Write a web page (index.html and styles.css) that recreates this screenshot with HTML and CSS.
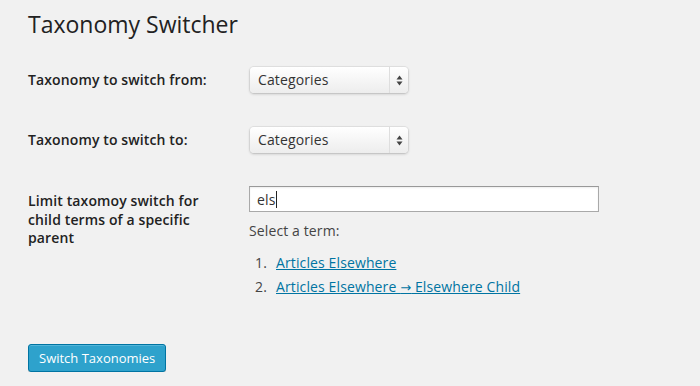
FILE: index.html
```html
<!DOCTYPE html>
<html>
<head>
<meta charset="utf-8">
<link rel="stylesheet" href="styles.css">
</head>
<body>
<div class="wrap">
  <h1 class="title">Taxonomy Switcher</h1>
  <div class="form">
    <div class="row">
      <div class="label">Taxonomy to switch from:</div>
      <div class="field">
        <div class="select">
          <span class="select-text">Categories</span>
          <span class="select-arrow">
            <svg width="7" height="11" viewBox="0 0 7 11"><path d="M3.5 0.5 L6.5 4.5 L0.5 4.5 Z M3.5 10.5 L6.5 6.5 L0.5 6.5 Z" fill="#444"/></svg>
          </span>
        </div>
      </div>
    </div>
    <div class="row">
      <div class="label">Taxonomy to switch to:</div>
      <div class="field">
        <div class="select">
          <span class="select-text">Categories</span>
          <span class="select-arrow">
            <svg width="7" height="11" viewBox="0 0 7 11"><path d="M3.5 0.5 L6.5 4.5 L0.5 4.5 Z M3.5 10.5 L6.5 6.5 L0.5 6.5 Z" fill="#444"/></svg>
          </span>
        </div>
      </div>
    </div>
    <div class="row row-top">
      <div class="label label-multi">Limit taxomoy switch for child terms of a specific parent</div>
      <div class="field">
        <div class="text-input"><span>els</span><span class="caret"></span></div>
        <p class="hint">Select a term:</p>
        <ol class="terms">
          <li><a href="#">Articles Elsewhere</a></li>
          <li><a href="#">Articles Elsewhere <span class="arrow">→</span> Elsewhere Child</a></li>
        </ol>
      </div>
    </div>
  </div>
  <div class="submit">
    <button class="button-primary">Switch Taxonomies</button>
  </div>
</div>
</body>
</html>
```

FILE: styles.css
```css
html, body {
  margin: 0;
  padding: 0;
  background: #f1f1f1;
}
body {
  font-family: "Open Sans", "Liberation Sans", sans-serif;
  font-size: 14px;
  letter-spacing: 0.12px;
  color: #444;
}
.wrap {
  padding: 10px 0 0 28px;
}
.title {
  margin: 0;
  font-size: 23px;
  font-weight: 400;
  line-height: 29px;
  letter-spacing: 0;
  color: #222;
}
.form {
  display: flex;
  flex-direction: column;
  gap: 34px;
  margin-top: 28px;
}
.row {
  display: flex;
  align-items: center;
}
.row-top {
  align-items: flex-start;
  margin-top: -1px;
}
.label {
  width: 200px;
  margin-right: 21px;
  flex: none;
  font-weight: 600;
  line-height: 18.5px;
  color: #222;
}
.label-multi {
  padding-top: 6px;
}
.field {
  flex: 1;
}
.select {
  width: 158px;
  height: 26px;
  box-sizing: border-box;
  display: flex;
  align-items: stretch;
  margin-left: 1px;
  border-radius: 4px;
  background: linear-gradient(#ffffff, #f4f4f4 60%, #ededed);
  box-shadow: 0 0 0 1px rgba(0,0,0,0.05), 0 1px 3px rgba(0,0,0,0.2);
}
.select-text {
  flex: 1;
  padding-left: 8px;
  line-height: 26px;
  color: #333;
}
.select-arrow {
  width: 18px;
  border-left: 1px solid #dedede;
  display: flex;
  align-items: center;
  justify-content: center;
}
.text-input {
  width: 350px;
  height: 26px;
  box-sizing: border-box;
  border: 1px solid #a9a9a9;
  border-top-color: #999;
  background: #fff;
  box-shadow: inset 0 1px 2px rgba(0,0,0,0.07);
  padding-left: 7px;
  display: flex;
  align-items: center;
  color: #333;
}
.caret {
  width: 1px;
  height: 17px;
  background: #222;
  margin-left: 1px;
}
.hint {
  margin: 10px 0 0;
  line-height: 18px;
}
.terms {
  margin: 14px 0 0;
  padding-left: 27px;
  list-style: none;
  counter-reset: term;
}
.terms li {
  line-height: 18px;
  margin-bottom: 6px;
  counter-increment: term;
}
.terms li::before {
  content: counter(term) ".";
  display: inline-block;
  width: 21px;
  margin-left: -21px;
  color: #444;
}
.terms a {
  color: #0074a2;
  text-decoration: underline;
}
.arrow {
  font-family: "DejaVu Sans", sans-serif;
  font-size: 13px;
}
.submit {
  margin-top: 41px;
}
.button-primary {
  height: 28px;
  margin: 0;
  padding: 0 10px 1px;
  font-family: "Open Sans", "Liberation Sans", sans-serif;
  font-size: 13px;
  line-height: 26px;
  letter-spacing: 0;
  color: #fff;
  background: #2ea2cc;
  border: 1px solid #0074a2;
  border-radius: 3px;
  box-shadow: inset 0 1px 0 rgba(120,200,230,0.5), 0 1px 0 rgba(0,0,0,0.15);
  cursor: pointer;
}
```
